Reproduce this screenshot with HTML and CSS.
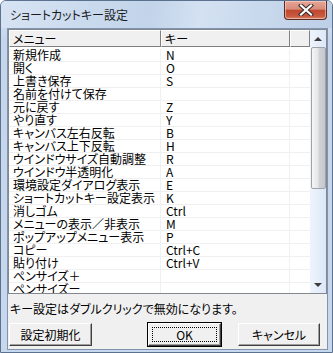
FILE: index.html
```html
<!DOCTYPE html>
<html lang="ja">
<head>
  <meta charset="UTF-8">
  <meta name="viewport" content="width=device-width, initial-scale=1.0">
  <title>ショートカットキー設定</title>
  <link rel="stylesheet" href="styles.css">
</head>
<body>
  <div class="window">
    <div class="titlebar">
      <span class="title">ショートカットキー設定</span>
      <button class="close" title="閉じる">
        <svg viewBox="0 0 16 12" width="16" height="12">
          <path d="M3 1.5 13 10.5M13 1.5 3 10.5" stroke="#3a2c2a" stroke-width="4.2" stroke-linecap="square" fill="none" />
          <path d="M3 1.5 13 10.5M13 1.5 3 10.5" stroke="#fff" stroke-width="2.2" stroke-linecap="square" fill="none" />
        </svg>
      </button>
    </div>

    <div class="client">
      <div class="list">
        <div class="list-main">
          <div class="list-header">
            <div class="hcell col-menu">メニュー</div>
            <div class="hcell col-key">キー</div>
            <div class="hcell col-rest"></div>
          </div>
          <div class="list-body">
            <div class="row"><span class="col-menu">新規作成</span><span class="col-key">N</span><span class="col-rest"></span></div>
            <div class="row"><span class="col-menu">開く</span><span class="col-key">O</span><span class="col-rest"></span></div>
            <div class="row"><span class="col-menu">上書き保存</span><span class="col-key">S</span><span class="col-rest"></span></div>
            <div class="row"><span class="col-menu">名前を付けて保存</span><span class="col-key"></span><span class="col-rest"></span></div>
            <div class="row"><span class="col-menu">元に戻す</span><span class="col-key">Z</span><span class="col-rest"></span></div>
            <div class="row"><span class="col-menu">やり直す</span><span class="col-key">Y</span><span class="col-rest"></span></div>
            <div class="row"><span class="col-menu">キャンバス左右反転</span><span class="col-key">B</span><span class="col-rest"></span></div>
            <div class="row"><span class="col-menu">キャンバス上下反転</span><span class="col-key">H</span><span class="col-rest"></span></div>
            <div class="row"><span class="col-menu">ウインドウサイズ自動調整</span><span class="col-key">R</span><span class="col-rest"></span></div>
            <div class="row"><span class="col-menu">ウインドウ半透明化</span><span class="col-key">A</span><span class="col-rest"></span></div>
            <div class="row"><span class="col-menu">環境設定ダイアログ表示</span><span class="col-key">E</span><span class="col-rest"></span></div>
            <div class="row"><span class="col-menu">ショートカットキー設定表示</span><span class="col-key">K</span><span class="col-rest"></span></div>
            <div class="row"><span class="col-menu">消しゴム</span><span class="col-key">Ctrl</span><span class="col-rest"></span></div>
            <div class="row"><span class="col-menu">メニューの表示／非表示</span><span class="col-key">M</span><span class="col-rest"></span></div>
            <div class="row"><span class="col-menu">ポップアップメニュー表示</span><span class="col-key">P</span><span class="col-rest"></span></div>
            <div class="row"><span class="col-menu">コピー</span><span class="col-key">Ctrl+C</span><span class="col-rest"></span></div>
            <div class="row"><span class="col-menu">貼り付け</span><span class="col-key">Ctrl+V</span><span class="col-rest"></span></div>
            <div class="row"><span class="col-menu">ペンサイズ＋</span><span class="col-key"></span><span class="col-rest"></span></div>
            <div class="row"><span class="col-menu">ペンサイズー</span><span class="col-key"></span><span class="col-rest"></span></div>
          </div>
        </div>
        <div class="scrollbar">
          <div class="sb-btn"><span class="arrow-up"></span></div>
          <div class="sb-thumb"></div>
          <div class="sb-track"></div>
          <div class="sb-btn"><span class="arrow-down"></span></div>
        </div>
      </div>

      <p class="hint">キー設定はダブルクリックで無効になります。</p>

      <div class="buttons">
        <button class="button btn-reset">設定初期化</button>
        <button class="button btn-ok"><span class="focus">OK</span></button>
        <button class="button btn-cancel">キャンセル</button>
      </div>
    </div>
  </div>
</body>
</html>
```

FILE: styles.css
```css
body {
  margin: 0;
  padding: 0;
  font-family: "Noto Sans CJK JP", "Noto Sans", sans-serif;
  font-size: 12px;
  font-feature-settings: "palt";
  color: #000;
  background-color: #fff;
}
.window {
  box-sizing: border-box;
  width: 333px;
  height: 353px;
  border: 1px solid #5b7190;
  border-radius: 6px 6px 0 0;
  background: linear-gradient(#d9e4f2, #c5d6ea 40px, #c8d8ec);
  display: flex;
  flex-direction: column;
  overflow: hidden;
}
.titlebar {
  height: 27px;
  display: flex;
  align-items: flex-start;
  justify-content: space-between;
  background: linear-gradient(100deg, #d6e3f3 0%, #c2d4ea 45%, #d3e1f2 60%, #bccfe7 100%);
}
.title {
  margin: 7px 0 0 9px;
  line-height: 14px;
  color: #1a1a1a;
}
.close {
  box-sizing: border-box;
  width: 43px;
  height: 19px;
  margin-right: 5px;
  padding: 0;
  border: 1px solid #5d2a22;
  border-top: none;
  border-radius: 0 0 4px 4px;
  background: linear-gradient(#e6a597 0%, #d88c7a 45%, #c2472f 52%, #c85a40 85%, #d98a6f 100%);
  box-shadow: inset 0 0 0 1px rgba(255, 230, 220, 0.5);
  display: flex;
  align-items: center;
  justify-content: center;
}
.client {
  flex: 1;
  margin: 0 4px 2px 6px;
  border: 1px solid #8094b2;
  background-color: #f0f0f0;
  display: flex;
  flex-direction: column;
}
.list {
  height: 265px;
  box-sizing: border-box;
  border: 1px solid #828790;
  background-color: #fff;
  display: flex;
}
.list-main {
  flex: 1;
  overflow: hidden;
}
.list-header {
  display: flex;
  height: 17px;
}
.hcell {
  box-sizing: border-box;
  height: 17px;
  line-height: 15px;
  padding-left: 3px;
  background-color: #f0f0f0;
  border-top: 1px solid #fff;
  border-left: 1px solid #fff;
  border-right: 1px solid #808080;
  border-bottom: 1px solid #808080;
  white-space: nowrap;
}
.col-menu {
  width: 152px;
  flex: none;
}
.col-key {
  width: 129px;
  flex: none;
}
.col-rest {
  flex: 1;
}
.list-body {
  height: 246px;
  padding-top: 2px;
  box-sizing: border-box;
  overflow: hidden;
}
.row {
  display: flex;
  height: 13px;
  box-sizing: border-box;
  border-bottom: 1px solid #f0f0f0;
  line-height: 12px;
  white-space: nowrap;
}
.row span {
  box-sizing: border-box;
  border-right: 1px solid #f0f0f0;
}
.row .col-menu {
  padding-left: 4px;
}
.row .col-key {
  padding-left: 5px;
}
.row .col-rest {
  border-right: none;
}
.scrollbar {
  width: 16px;
  flex: none;
  display: flex;
  flex-direction: column;
  background: linear-gradient(to right, #eef4fc, #dce8f7);
}
.sb-btn {
  height: 17px;
  display: flex;
  align-items: center;
  justify-content: center;
}
.arrow-up {
  width: 0;
  height: 0;
  border-left: 4px solid transparent;
  border-right: 4px solid transparent;
  border-bottom: 4px solid #3c3c3c;
}
.arrow-down {
  width: 0;
  height: 0;
  border-left: 4px solid transparent;
  border-right: 4px solid transparent;
  border-top: 4px solid #3c3c3c;
}
.sb-thumb {
  height: 142px;
  margin: 0 0 0 1px;
  box-sizing: border-box;
  border: 1px solid #9ea3ab;
  border-radius: 2px;
  background: linear-gradient(to right, #f6f6f6, #e6e6e6 45%, #cfd2d7 55%, #c5c9cf);
}
.sb-track {
  flex: 1;
}
.hint {
  margin: 8px 0 0 2px;
  line-height: 14px;
}
.buttons {
  display: flex;
  margin-top: 7px;
  padding-left: 1px;
}
.button {
  box-sizing: border-box;
  height: 23px;
  padding: 0;
  font-family: inherit;
  font-size: 12px;
  font-feature-settings: "palt";
  color: #000;
  background-color: #f0f0f0;
  border: 1px solid;
  border-color: #fff #404040 #404040 #fff;
  box-shadow: inset -1px -1px #a0a0a0;
}
.btn-reset {
  width: 83px;
}
.btn-ok {
  width: 73px;
  margin-left: 56px;
  outline: 1px solid #000;
  outline-offset: 0;
  display: flex;
  align-items: stretch;
  justify-content: stretch;
  padding: 3px;
}
.btn-ok .focus {
  flex: 1;
  border: 1px dotted #000;
  line-height: 13px;
}
.btn-cancel {
  width: 82px;
  margin-left: 17px;
}
```
